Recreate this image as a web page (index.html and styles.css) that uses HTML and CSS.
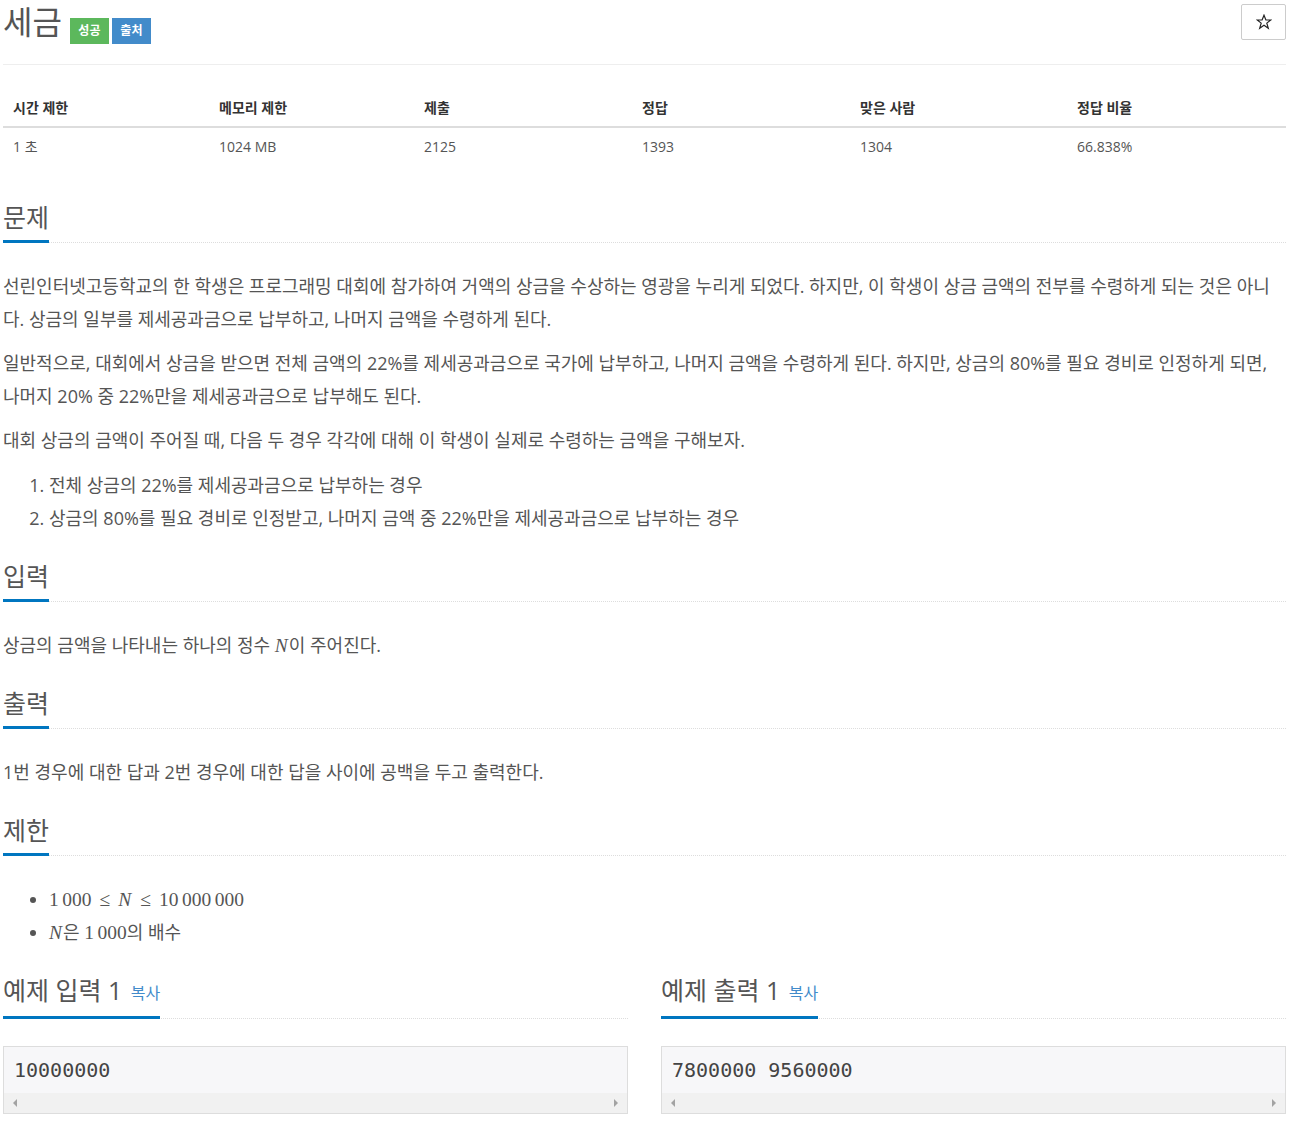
FILE: index.html
```html
<!DOCTYPE html>
<html lang="ko">
<head>
    <meta charset="UTF-8">
    <meta name="viewport" content="width=device-width, initial-scale=1.0">
    <title>세금</title>
    <link rel="stylesheet" href="styles.css">
</head>
<body>
<div class="page">

    <!-- PROBLEM TITLE -->
    <div class="page-header">
        <h1>
            <span class="title">세금</span>
            <span class="label label-success">성공</span>
            <span class="label label-info">출처</span>
        </h1>
        <button class="star-btn" title="즐겨찾기">
            <svg width="16" height="16" viewBox="0 0 16 16">
                <polygon points="8,1.2 9.9,6 14.8,6 10.8,9.1 12.3,14.2 8,11.2 3.7,14.2 5.2,9.1 1.2,6 6.1,6" fill="none" stroke="#222" stroke-width="1.2" stroke-linejoin="miter"/>
            </svg>
        </button>
    </div>

    <!-- PROBLEM INFO -->
    <table class="problem-info">
        <thead>
            <tr>
                <th class="c1">시간 제한</th>
                <th class="c2">메모리 제한</th>
                <th class="c3">제출</th>
                <th class="c4">정답</th>
                <th class="c5">맞은 사람</th>
                <th>정답 비율</th>
            </tr>
        </thead>
        <tbody>
            <tr>
                <td>1 초 </td>
                <td>1024 MB</td>
                <td>2125</td>
                <td>1393</td>
                <td>1304</td>
                <td>66.838%</td>
            </tr>
        </tbody>
    </table>

    <!-- DESCRIPTION -->
    <section class="problem-section">
        <div class="headline"><h2>문제</h2></div>
        <p>선린인터넷고등학교의 한 학생은 프로그래밍 대회에 참가하여 거액의 상금을 수상하는 영광을 누리게 되었다. 하지만, 이 학생이 상금 금액의 전부를 수령하게 되는 것은 아니다. 상금의 일부를 제세공과금으로 납부하고, 나머지 금액을 수령하게 된다.</p>
        <p>일반적으로, 대회에서 상금을 받으면 전체 금액의 22%를 제세공과금으로 국가에 납부하고, 나머지 금액을 수령하게 된다. 하지만, 상금의 80%를 필요 경비로 인정하게 되면, 나머지 20% 중 22%만을 제세공과금으로 납부해도 된다.</p>
        <p>대회 상금의 금액이 주어질 때, 다음 두 경우 각각에 대해 이 학생이 실제로 수령하는 금액을 구해보자.</p>
        <ol>
            <li>전체 상금의 22%를 제세공과금으로 납부하는 경우</li>
            <li>상금의 80%를 필요 경비로 인정받고, 나머지 금액 중 22%만을 제세공과금으로 납부하는 경우</li>
        </ol>
    </section>

    <!-- INPUT -->
    <section class="problem-section">
        <div class="headline"><h2>입력</h2></div>
        <p>상금의 금액을 나타내는 하나의 정수 <span class="math"><span class="mi">N</span></span>이 주어진다.</p>
    </section>

    <!-- OUTPUT -->
    <section class="problem-section">
        <div class="headline"><h2>출력</h2></div>
        <p>1번 경우에 대한 답과 2번 경우에 대한 답을 사이에 공백을 두고 출력한다.</p>
    </section>

    <!-- LIMIT -->
    <section class="problem-section">
        <div class="headline"><h2>제한</h2></div>
        <ul>
            <li><span class="math">1<span class="thin"></span>000<span class="rel">≤</span><span class="mi">N</span><span class="rel">≤</span>10<span class="thin"></span>000<span class="thin"></span>000</span></li>
            <li><span class="math"><span class="mi">N</span></span>은 <span class="math">1<span class="thin"></span>000</span>의 배수</li>
        </ul>
    </section>

    <!-- SAMPLES -->
    <div class="samples">
        <section class="problem-section">
            <div class="headline"><h2>예제 입력 1 <a class="copy-btn">복사</a></h2></div>
            <div class="sample-data">
                <pre>10000000</pre>
                <div class="scroll-bar"><span class="arrow-left"></span><span class="arrow-right"></span></div>
            </div>
        </section>
        <section class="problem-section">
            <div class="headline"><h2>예제 출력 1 <a class="copy-btn">복사</a></h2></div>
            <div class="sample-data">
                <pre>7800000 9560000</pre>
                <div class="scroll-bar"><span class="arrow-left"></span><span class="arrow-right"></span></div>
            </div>
        </section>
    </div>

</div>
</body>
</html>
```

FILE: styles.css
```css
* {
    box-sizing: border-box;
}

body {
    margin: 0;
    font-family: "Open Sans", "Noto Sans CJK KR", sans-serif;
    font-size: 18px;
    color: #555;
    background: #fff;
}

.page {
    width: 1283px;
    margin-left: 3px;
}

/* TITLE */
.page-header {
    display: flex;
    justify-content: space-between;
    align-items: flex-start;
    padding-top: 4px;
    padding-bottom: 20px;
    border-bottom: 1px solid #eee;
}

.page-header h1 {
    display: flex;
    align-items: flex-start;
    margin: 0;
    font-weight: 400;
}

.title {
    font-size: 32px;
    line-height: 36px;
    color: #555;
    margin-right: 8px;
}

.label {
    margin-top: 14px;
    margin-right: 3px;
    width: 39px;
    height: 26px;
    line-height: 26px;
    text-align: center;
    font-size: 12px;
    font-weight: bold;
    color: #fff;
}

.label-success {
    background: #5cb85c;
}

.label-info {
    background: #428bca;
}

.star-btn {
    width: 45px;
    height: 36px;
    background: #fff;
    border: 1px solid #ccc;
    border-radius: 2px;
    display: flex;
    align-items: center;
    justify-content: center;
    padding: 0;
}

/* INFO TABLE */
.problem-info {
    width: 100%;
    border-collapse: collapse;
    margin-top: 25px;
    margin-bottom: 35px;
    font-size: 14px;
}

.problem-info th,
.problem-info td {
    text-align: left;
    padding: 8px 10px;
    line-height: 20px;
}

.problem-info th {
    color: #333;
    font-weight: bold;
    border-bottom: 2px solid #ddd;
}

.problem-info td {
    padding-top: 9px;
    padding-bottom: 9px;
}

.problem-info .c1 { width: 206px; }
.problem-info .c2 { width: 205px; }
.problem-info .c3 { width: 218px; }
.problem-info .c4 { width: 218px; }
.problem-info .c5 { width: 217px; }

/* SECTIONS */
.problem-section {
    margin-top: 25px;
}

.headline {
    border-bottom: 1px dotted #ddd;
    margin-bottom: 27px;
}

.headline h2 {
    display: inline-block;
    margin: 0 0 -1px;
    font-size: 25px;
    font-weight: 400;
    line-height: 32px;
    padding-bottom: 7px;
    border-bottom: 3px solid #0076c0;
    color: #555;
}

.problem-section p {
    margin: 0 0 12px;
    line-height: 32.5px;
}

.problem-section p:last-child {
    margin-bottom: 0;
}

.problem-section ol,
.problem-section ul {
    margin: 0;
    padding-left: 46px;
    line-height: 33px;
}

/* MATH */
.math {
    font-family: "Liberation Serif", serif;
    font-size: 19.5px;
    color: #555;
}

.mi {
    font-style: italic;
    padding-right: 1px;
}

.rel {
    margin: 0 8px;
}

.thin {
    display: inline-block;
    width: 3.5px;
}

/* SAMPLES */
.samples {
    display: grid;
    grid-template-columns: 1fr 1fr;
    column-gap: 33px;
}

.copy-btn {
    font-size: 16px;
    color: #428bca;
    margin-left: 2px;
    vertical-align: 1px;
}

.sample-data {
    margin-top: 26px;
    border: 1px solid #ddd;
    background: #f7f7f9;
}

.sample-data pre {
    margin: 0;
    padding: 9px 10px 9px;
    font-family: "DejaVu Sans Mono", monospace;
    font-size: 20px;
    line-height: 28px;
    color: #444;
}

.scroll-bar {
    height: 20px;
    background: #f1f1f1;
    display: flex;
    justify-content: space-between;
    align-items: center;
    padding: 0 9px;
}

.arrow-left,
.arrow-right {
    width: 0;
    height: 0;
    border-top: 4px solid transparent;
    border-bottom: 4px solid transparent;
}

.arrow-left {
    border-right: 4px solid #a3a3a3;
}

.arrow-right {
    border-left: 4px solid #a3a3a3;
}
```
